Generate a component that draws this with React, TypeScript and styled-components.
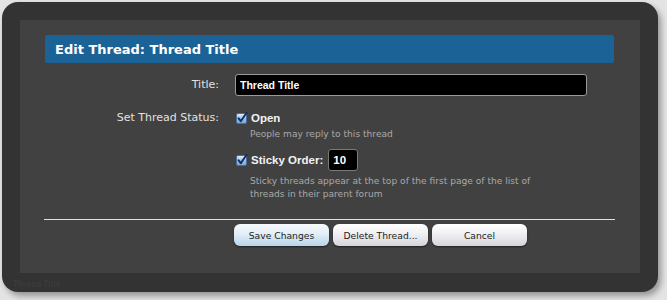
import styled, { createGlobalStyle } from 'styled-components';

const GlobalStyle = createGlobalStyle`
  html, body {
    margin: 0;
    padding: 0;
    background: #e4e4e4;
  }
`;

const CheckBox = () => (
    <CheckIcon width="12" height="12" viewBox="0 0 12 12">
        <defs>
            <linearGradient id="cbfill" x1="0" y1="0" x2="0" y2="1">
                <stop offset="0" stopColor="#e6f0fa" />
                <stop offset="0.5" stopColor="#9cc4ea" />
                <stop offset="1" stopColor="#6fa6dc" />
            </linearGradient>
        </defs>
        <rect x="0.5" y="1.5" width="10" height="10" rx="1.5" fill="url(#cbfill)" stroke="#4d6f96" strokeWidth="1" />
        <path d="M2.6 6.4 L4.8 9.2 L10.6 0.8" fill="none" stroke="#142f63" strokeWidth="2" strokeLinecap="round" strokeLinejoin="round" />
    </CheckIcon>
);

export default function App() {
    return (
        <>
            <GlobalStyle />
            <Page>
                <Frame>
                    <Panel>
                        <Header>Edit Thread: Thread Title</Header>
                        <Form>
                            <Label>Title:</Label>
                            <TextInput value="Thread Title" readOnly />

                            <Label $top>Set Thread Status:</Label>
                            <Field>
                                <CheckLine>
                                    <CheckBox />
                                    <CheckText>Open</CheckText>
                                </CheckLine>
                                <Hint>People may reply to this thread</Hint>
                                <CheckLine $spaced>
                                    <CheckBox />
                                    <CheckText>Sticky Order:</CheckText>
                                    <SmallInput value="10" readOnly />
                                </CheckLine>
                                <Hint $wrap>Sticky threads appear at the top of the first page of the list of threads in their parent forum</Hint>
                            </Field>
                        </Form>
                        <Divider />
                        <ButtonRow>
                            <Button $primary>Save Changes</Button>
                            <Button>Delete Thread...</Button>
                            <Button>Cancel</Button>
                        </ButtonRow>
                    </Panel>
                    <BehindText>Thread Title</BehindText>
                </Frame>
            </Page>
        </>
    );
}

const Page = styled.div`
    width: 667px;
    height: 300px;
    box-sizing: border-box;
    padding: 2px 9px 8px 2px;
    overflow: hidden;
`;

const Frame = styled.div`
    position: relative;
    height: 100%;
    box-sizing: border-box;
    padding: 18px 18px 19px 18px;
    background: #333333;
    border-radius: 16px;
    box-shadow: 3px 4px 6px rgba(0, 0, 0, 0.35);
`;

const Panel = styled.div`
    height: 100%;
    box-sizing: border-box;
    padding: 15px 26px 0 25px;
    background: #414141;
    font-family: "DejaVu Sans", sans-serif;
`;

const Header = styled.div`
    height: 28px;
    display: flex;
    align-items: center;
    padding-left: 10px;
    background: #1b6297;
    border-radius: 2px;
    color: #ffffff;
    font-size: 13px;
    font-weight: bold;
`;

const Form = styled.div`
    display: grid;
    grid-template-columns: 174px 1fr;
    column-gap: 16px;
    row-gap: 14px;
    margin-top: 11px;
`;

const Label = styled.div<{ $top?: boolean }>`
    text-align: right;
    color: #e2e2e2;
    font-size: 11px;
    line-height: ${p => (p.$top ? '16px' : '22px')};
`;

const TextInput = styled.input`
    width: 352px;
    height: 22px;
    box-sizing: border-box;
    padding: 0 4px;
    background: #000000;
    border: 1px solid #9a9a9a;
    border-radius: 3px;
    color: #ffffff;
    font-family: "Liberation Sans", sans-serif;
    font-size: 10.5px;
    font-weight: bold;
    outline: none;
`;

const Field = styled.div`
    display: flex;
    flex-direction: column;
`;

const CheckLine = styled.div<{ $spaced?: boolean }>`
    display: flex;
    align-items: center;
    gap: 3px;
    min-height: 16px;
    margin-top: ${p => (p.$spaced ? '8px' : '0')};
`;

const CheckIcon = styled.svg`
    flex: none;
    margin-left: 1px;
`;

const CheckText = styled.span`
    color: #f2f2f2;
    font-family: "Liberation Sans", sans-serif;
    font-size: 11.5px;
    font-weight: bold;
`;

const SmallInput = styled.input`
    width: 30px;
    height: 22px;
    box-sizing: border-box;
    margin-left: 2px;
    padding: 0 4px;
    background: #000000;
    border: 1px solid #7a7a7a;
    border-radius: 3px;
    color: #ffffff;
    font-family: "Liberation Sans", sans-serif;
    font-size: 11.5px;
    font-weight: bold;
    outline: none;
`;

const Hint = styled.div<{ $wrap?: boolean }>`
    padding-left: 15px;
    margin-top: ${p => (p.$wrap ? '4px' : '1px')};
    max-width: 300px;
    color: #a9a9a9;
    font-size: 9.1px;
    line-height: ${p => (p.$wrap ? '13px' : '14px')};
`;

const Divider = styled.div`
    height: 1px;
    margin: 18px -1px 0 -1px;
    background: #d6e4ee;
`;

const ButtonRow = styled.div`
    display: flex;
    gap: 4px;
    margin-top: 4px;
    padding-left: 189px;
`;

const Button = styled.button<{ $primary?: boolean }>`
    width: 95px;
    height: 22px;
    padding: 0;
    border: none;
    border-radius: 6px;
    background: ${p => (p.$primary
        ? 'linear-gradient(#f6f9fc, #e2eef7 45%, #b7d4ea)'
        : 'linear-gradient(#ffffff, #f0f0f4 45%, #d4d4dc)')};
    box-shadow: 0 1px 2px rgba(0, 0, 0, 0.5);
    color: #1c1c1c;
    font-family: "DejaVu Sans", sans-serif;
    font-size: 9.2px;
`;

const BehindText = styled.span`
    position: absolute;
    left: 11px;
    bottom: 3px;
    color: #3e3e3e;
    font-family: "DejaVu Sans", sans-serif;
    font-size: 8px;
`;
